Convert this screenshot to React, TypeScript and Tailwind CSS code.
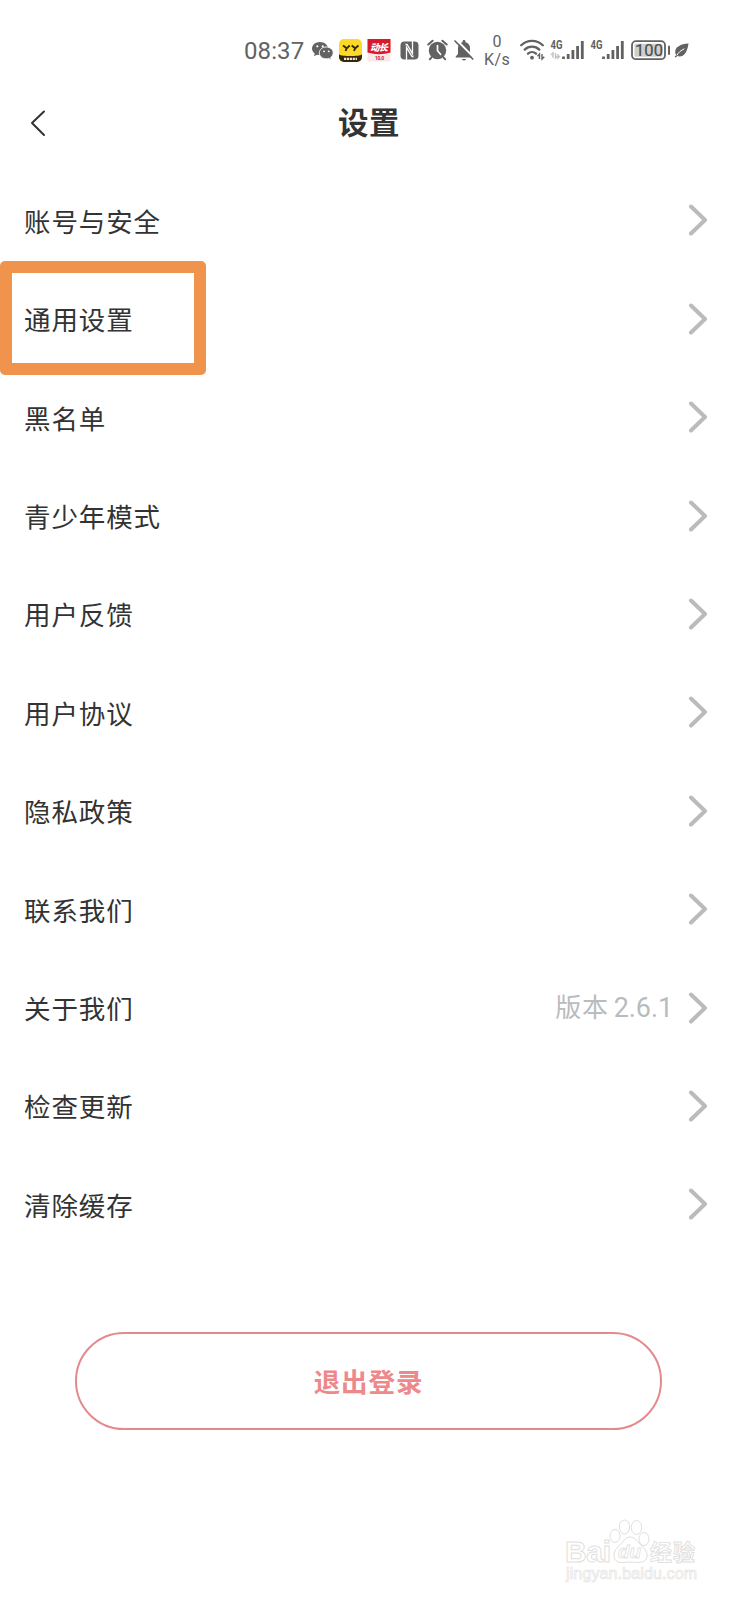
import type { ReactNode } from "react";
import clsx from "clsx";

interface SettingItem {
  label: string;
  /** Secondary text shown before the chevron */
  value?: string;
  highlighted?: boolean;
}

const items: SettingItem[] = [
  { label: "账号与安全" },
  { label: "通用设置", highlighted: true },
  { label: "黑名单" },
  { label: "青少年模式" },
  { label: "用户反馈" },
  { label: "用户协议" },
  { label: "隐私政策" },
  { label: "联系我们" },
  { label: "关于我们", value: "2.6.1" },
  { label: "检查更新" },
  { label: "清除缓存" },
];

interface StatusIconProps {
  width: number;
  className?: string;
  children: ReactNode;
}

/** All status icons share a 30px tall canvas so they line up vertically. */
function StatusIcon({ width, className, children }: StatusIconProps) {
  return (
    <svg
      width={width}
      height={30}
      viewBox={`0 0 ${width} 30`}
      fill="none"
      className={clsx("shrink-0 text-[#626262]", className)}
    >
      {children}
    </svg>
  );
}

function Signal({ className, data }: { className?: string; data?: boolean }) {
  return (
    <StatusIcon width={34} className={className}>
      <text
        x="0.5"
        y="13.7"
        fontSize="12.5"
        fontWeight="700"
        fontFamily="Roboto, sans-serif"
        fill="currentColor"
        textLength="12"
        lengthAdjust="spacingAndGlyphs"
      >
        4G
      </text>
      {data && (
        <path d="M3 23V18l-2 2M5.5 18v5l2-2M8 19v4l2-2" stroke="#c4c4c4" strokeWidth="1.4" />
      )}
      <path
        d="M13.500 21.500v2.500M18.200 18.900v5.100M22.900 15v9M27.600 11v13M32.300 6v18"
        stroke="currentColor"
        strokeWidth="2.800"
      />
    </StatusIcon>
  );
}

function StatusBar() {
  return (
    <div className="flex h-[75px] items-start pt-[35px] pl-[244px] font-[Roboto,sans-serif] text-[#626262]">
      <span className="w-[61px] text-[24px] leading-[32px] tracking-[0.1px] whitespace-nowrap">
        08:37
      </span>

      {/* WeChat */}
      <StatusIcon width={22} className="ml-[7px]">
        <path
          d="M8 7C3.600 7 0 9.800 0 13.500c0 2 1.100 3.800 2.800 5l-.8 2.700 3-1.500c1 .3 2 .4 3 .4 4.400 0 8-3 8-6.600S12.400 7 8 7Z"
          fill="currentColor"
        />
        <path
          d="M14.300 12c-4 0-7 2.600-7 5.900s3.100 5.900 7 5.900c.9 0 1.700-.1 2.500-.4l2.600 1.300-.7-2.300c1.500-1.100 2.500-2.700 2.500-4.500 0-3.300-3-5.900-6.900-5.900Z"
          fill="currentColor"
          stroke="#fff"
          strokeWidth="0.900"
        />
        <g fill="#fff">
          <circle cx="5.300" cy="11.300" r="1.100" />
          <circle cx="10.700" cy="11.300" r="1.100" />
          <circle cx="12" cy="16.300" r="0.900" />
          <circle cx="16.700" cy="16.300" r="0.900" />
        </g>
      </StatusIcon>

      {/* YY */}
      <StatusIcon width={23} className="ml-[5px]">
        <rect y="4" width="23" height="23" rx="5" fill="#fbd926" />
        <path d="M0 19.500c3 2 20 2 23 0V22a5 5 0 0 1-5 5H5a5 5 0 0 1-5-5Z" fill="#35260c" />
        <path
          d="m4 10.500 3.700 2.800 3-2.800M7.700 13.300 6.500 16M12.700 10.500l3.500 2.800 3.300-2.800M16.200 13.300 15 16"
          stroke="#35260c"
          strokeWidth="1.800"
        />
        <path d="M5 23.800h13" stroke="#f3e5bd" strokeWidth="2.200" strokeDasharray="2.200 0.700" />
      </StatusIcon>

      <StatusIcon width={24} className="ml-[5px]">
        <rect x="0.500" y="4" width="23" height="22.500" rx="1" fill="#fbe9e8" />
        <path d="M.5 4h23v13.500q-11.500 3.500-23 0Z" fill="#d9182b" />
        <text
          x="3"
          y="15.500"
          fontSize="9.500"
          fontWeight="900"
          fontStyle="italic"
          fontFamily="'Noto Sans CJK SC', sans-serif"
          fill="#fff"
          textLength="18"
        >
          动长
        </text>
        <text
          x="8"
          y="25"
          fontSize="5"
          fontWeight="700"
          fontFamily="Roboto, sans-serif"
          fill="#d9182b"
          textLength="9"
        >
          10.0
        </text>
      </StatusIcon>

      {/* NFC */}
      <StatusIcon width={19} className="ml-[9px]">
        <rect x="0.500" y="6.500" width="18" height="18" rx="4" fill="currentColor" />
        <path
          d="M3.500 9.500H7l5.500 9.200V6M15.500 21.500H12L6.500 12.300V25"
          stroke="#fff"
          strokeWidth="1.300"
        />
        <path d="M2.500 9.500h3M13.500 21.500h3" stroke="currentColor" strokeWidth="2.500" />
      </StatusIcon>

      {/* Alarm */}
      <StatusIcon width={21} className="ml-[7.500px]">
        <circle cx="10.500" cy="15.500" r="8.700" fill="currentColor" />
        <path
          d="M1.300 9.500 5.600 5.700M19.700 9.500l-4.300-3.800M4.500 22.300l-1.700 2M16.500 22.300l1.700 2"
          stroke="currentColor"
          strokeWidth="2"
          strokeLinecap="round"
        />
        <path d="M10.500 10.500v5.300l3 3.500" stroke="#fff" strokeWidth="1.700" strokeLinecap="round" />
      </StatusIcon>

      {/* Muted bell */}
      <StatusIcon width={20} className="ml-[6px]">
        <path
          d="M10 5c-.9 0-1.500.6-1.500 1.500v.7C5.500 8 4 10.300 4 13v6l-2.300 2.500v1h16.600v-1L16 19v-6c0-2.700-1.500-5-4.500-5.800v-.7C11.500 5.600 10.900 5 10 5Z"
          fill="currentColor"
        />
        <path d="M7.700 24h4.600q-2.300 3-4.600 0Z" fill="currentColor" />
        <path d="M2.500 5 20 22.800" stroke="#fff" strokeWidth="2" />
        <path d="M1 6l17.700 18" stroke="currentColor" strokeWidth="1.700" strokeLinecap="round" />
      </StatusIcon>

      <div className="ml-[10.500px] flex w-[26px] flex-col items-center text-[16px] leading-[18px]">
        <span className="-mt-[2px]">0</span>
        <span className="tracking-[0.400px]">K/s</span>
      </div>

      {/* Wi-Fi */}
      <StatusIcon width={26} className="ml-[10px]">
        <g stroke="currentColor" strokeWidth="2.300" strokeLinecap="round">
          <path d="M1.200 10.200a15.500 15.500 0 0 1 21.600 0" />
          <path d="M4.700 14.600a10.500 10.500 0 0 1 14.600 0" />
          <path d="M8 18.700a6 6 0 0 1 8 0" />
        </g>
        <circle cx="12" cy="22.700" r="1.900" fill="currentColor" />
        <path d="M19.500 24v-5l-2 2.300M22 19v5l2.300-2.300" stroke="currentColor" strokeWidth="1.400" />
      </StatusIcon>

      <Signal className="ml-[3.500px]" data />
      <Signal className="ml-[6px]" />

      {/* Battery */}
      <StatusIcon width={40} className="ml-[7px]">
        <rect x="1" y="6.200" width="33" height="18" rx="4" stroke="currentColor" strokeWidth="1.800" />
        <rect x="3.500" y="8.700" width="28" height="13" rx="1.500" fill="#cfcfcf" />
        <text
          x="4"
          y="21"
          fontSize="16.500"
          fontWeight="400"
          fontFamily="Roboto, sans-serif"
          fill="#4c4c4c"
          stroke="#4c4c4c"
          strokeWidth="0.200"
          textLength="28"
        >
          100
        </text>
        <path d="M38 11.500v7.500" stroke="currentColor" strokeWidth="2" strokeLinecap="round" />
      </StatusIcon>

      {/* Power saving leaf */}
      <StatusIcon width={15} className="ml-[3px]">
        <path
          d="M14.500 8.500C6.500 9 .8 12 1.200 17.500c.1 1 .5 1.800 1 2.400L.6 21.800l1 .8 1.800-1.500c5.500 1.500 9.600-2.100 11.100-12.600Z"
          fill="currentColor"
        />
        <path d="M2.800 20.500c1.700-3.300 4.200-5.100 7.500-6.700" stroke="#fff" strokeWidth="1" />
      </StatusIcon>
    </div>
  );
}

function SettingRow({ label, value, highlighted }: SettingItem) {
  return (
    <li className="relative flex h-[98.4px] items-center pr-[29px] pl-6">
      {highlighted && (
        <div className="absolute -top-[9px] left-0 h-[114px] w-[206px] rounded-[5px] bg-[#f0944d] px-[12px] pt-[11.500px] pb-[12px]">
          <div className="h-full bg-white" />
        </div>
      )}
      <span className="relative -mt-[1px] flex-1 text-[26.500px] tracking-[0.900px] text-[#333]">
        {label}
      </span>
      {value && (
        <span className="-mt-[2px] mr-[15px] flex items-baseline text-[26px] tracking-[0.800px] text-[#b9bbbd]">
          版本
          <span className="ml-[5px] font-[Roboto,sans-serif] text-[27px] tracking-[-0.100px]">
            {value}
          </span>
        </span>
      )}
      <svg width="20" height="32" viewBox="0 0 20 32" fill="none" className="-mt-[1.500px]">
        <path
          d="M3 2.500 17 16 3 29.500"
          stroke="#b9bbbd"
          strokeWidth="4"
          strokeLinecap="round"
          strokeLinejoin="round"
        />
      </svg>
    </li>
  );
}

function Watermark() {
  return (
    <svg
      width="140"
      height="70"
      viewBox="0 0 140 70"
      fill="#fff"
      stroke="#dfdfdf"
      strokeWidth="1"
      className="mt-[85px] ml-[560px]"
      fontFamily="'Liberation Sans', 'Noto Sans CJK SC', sans-serif"
    >
      <text x="5" y="46.500" fontSize="30" fontWeight="700" textLength="46">
        Bai
      </text>
      <ellipse cx="55" cy="21" rx="5" ry="6.500" />
      <ellipse cx="64.500" cy="12" rx="5.200" ry="7" />
      <ellipse cx="76.500" cy="12.500" rx="5.200" ry="7" />
      <ellipse cx="84" cy="24" rx="5" ry="6.500" />
      <path d="M70 22c-5 0-7 5-11 9-7 6-7 15 1 16.500 4 .5 6-.5 10-.5s7 1 11 .3c8-1.500 8-10 1-16.300-4.500-4-7-9-12-9Z" />
      <text
        x="58"
        y="43"
        fontSize="19"
        fontWeight="700"
        fontStyle="italic"
        strokeWidth="0.800"
        textLength="23"
        lengthAdjust="spacingAndGlyphs"
      >
        du
      </text>
      <text x="90" y="45" fontSize="22" fontWeight="700" strokeWidth="0.900" textLength="45">
        经验
      </text>
      <text x="6" y="64" fontSize="16" stroke="#e4e4e4" strokeWidth="0.700" textLength="131">
        jingyan.baidu.com
      </text>
    </svg>
  );
}

export default function App() {
  return (
    <div className="h-[1600px] w-[737px] overflow-hidden bg-white font-['Noto_Sans_CJK_SC',sans-serif]">
      <StatusBar />

      <header className="flex h-[97px] items-center pb-[2px] pl-[29px]">
        <svg width="18" height="28" viewBox="0 0 18 28" fill="none">
          <path
            d="M15 2.500 3 14l12 12"
            stroke="#333"
            strokeWidth="2"
            strokeLinecap="round"
            strokeLinejoin="round"
          />
        </svg>
        <h1 className="flex-1 pr-[46px] pb-[2px] text-center text-[30.500px] font-bold tracking-[0.500px] text-[#333]">
          设置
        </h1>
      </header>

      <ul>
        {items.map((item) => (
          <SettingRow key={item.label} {...item} />
        ))}
      </ul>

      <button className="mt-[78px] ml-[75px] flex h-[98px] w-[587px] items-center justify-center rounded-full border-2 border-[#e48a8e] text-[26.500px] font-bold tracking-[0.900px] text-[#ed898b]">
        退出登录
      </button>

      <Watermark />
    </div>
  );
}
